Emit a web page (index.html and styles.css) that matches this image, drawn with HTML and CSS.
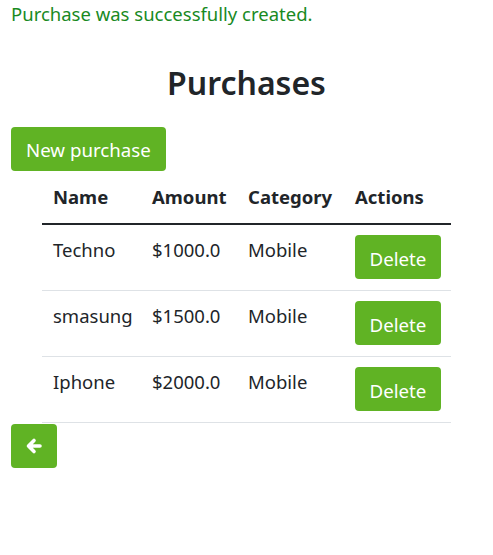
FILE: index.html
```html
<!DOCTYPE html>
<html>
<head>
<meta charset="utf-8">
<link rel="stylesheet" href="styles.css">
</head>
<body>
<p class="notice">Purchase was successfully created.</p>
<h1 class="title">Purchases</h1>
<div class="toolbar"><a class="btn btn-lg">New purchase</a></div>
<table class="table">
  <colgroup><col class="c1"><col class="c2"><col class="c3"><col class="c4"></colgroup>
  <thead>
    <tr><th>Name</th><th>Amount</th><th>Category</th><th>Actions</th></tr>
  </thead>
  <tbody>
    <tr><td>Techno</td><td>$1000.0</td><td>Mobile</td><td><a class="btn btn-del">Delete</a></td></tr>
    <tr><td>smasung</td><td>$1500.0</td><td>Mobile</td><td><a class="btn btn-del">Delete</a></td></tr>
    <tr><td>Iphone</td><td>$2000.0</td><td>Mobile</td><td><a class="btn btn-del">Delete</a></td></tr>
  </tbody>
</table>
<div class="toolbar"><a class="btn btn-back"><svg width="18" height="18" viewBox="0 0 18 18"><path d="M3.5 9H15M9 3.5L3.5 9L9 14.5" fill="none" stroke="#fff" stroke-width="3.6" stroke-linecap="round" stroke-linejoin="round"/></svg></a></div>
</body>
</html>
```
FILE: styles.css
```css
* { box-sizing: border-box; }
body {
  margin: 0;
  padding: 0 11px;
  font-family: "Noto Sans", "Open Sans", sans-serif;
  font-size: 18.5px;
  color: #212529;
  background: #fff;
}
.notice {
  margin: 0;
  padding-top: 1px;
  color: #198a1f;
  font-size: 18.5px;
  line-height: 26px;
}
.title {
  text-align: center;
  font-size: 32px;
  font-weight: 600;
  margin: 36px 0 24px;
  line-height: 40px;
}
.toolbar { display: flex; }
.btn {
  display: inline-flex;
  align-items: center;
  justify-content: center;
  background: #60b324;
  color: #fff;
  border-radius: 4px;
  text-decoration: none;
}
.btn-lg {
  height: 44px;
  padding: 0 15px;
  font-size: 18.7px;
}
.table {
  border-collapse: collapse;
  table-layout: fixed;
  margin: 0 auto;
  width: 409px;
}
.c1 { width: 99px; }
.c2 { width: 96px; }
.c3 { width: 107px; }
.c4 { width: 107px; }
.table th, .table td {
  text-align: left;
  vertical-align: top;
  padding: 0 11px;
  white-space: nowrap;
}
.table th {
  font-weight: 700;
  height: 53px;
  padding-top: 13px;
  border-bottom: 2px solid #212529;
}
.table td {
  height: 66px;
  padding-top: 12px;
  border-bottom: 1px solid #dee2e6;
}
.table td:last-child { padding-top: 10px; }
.btn-del {
  width: 86px;
  height: 44px;
  padding-top: 3px;
  font-size: 18.7px;
}
.btn-back {
  width: 46px;
  height: 44px;
  margin-top: 1px;
}
```
